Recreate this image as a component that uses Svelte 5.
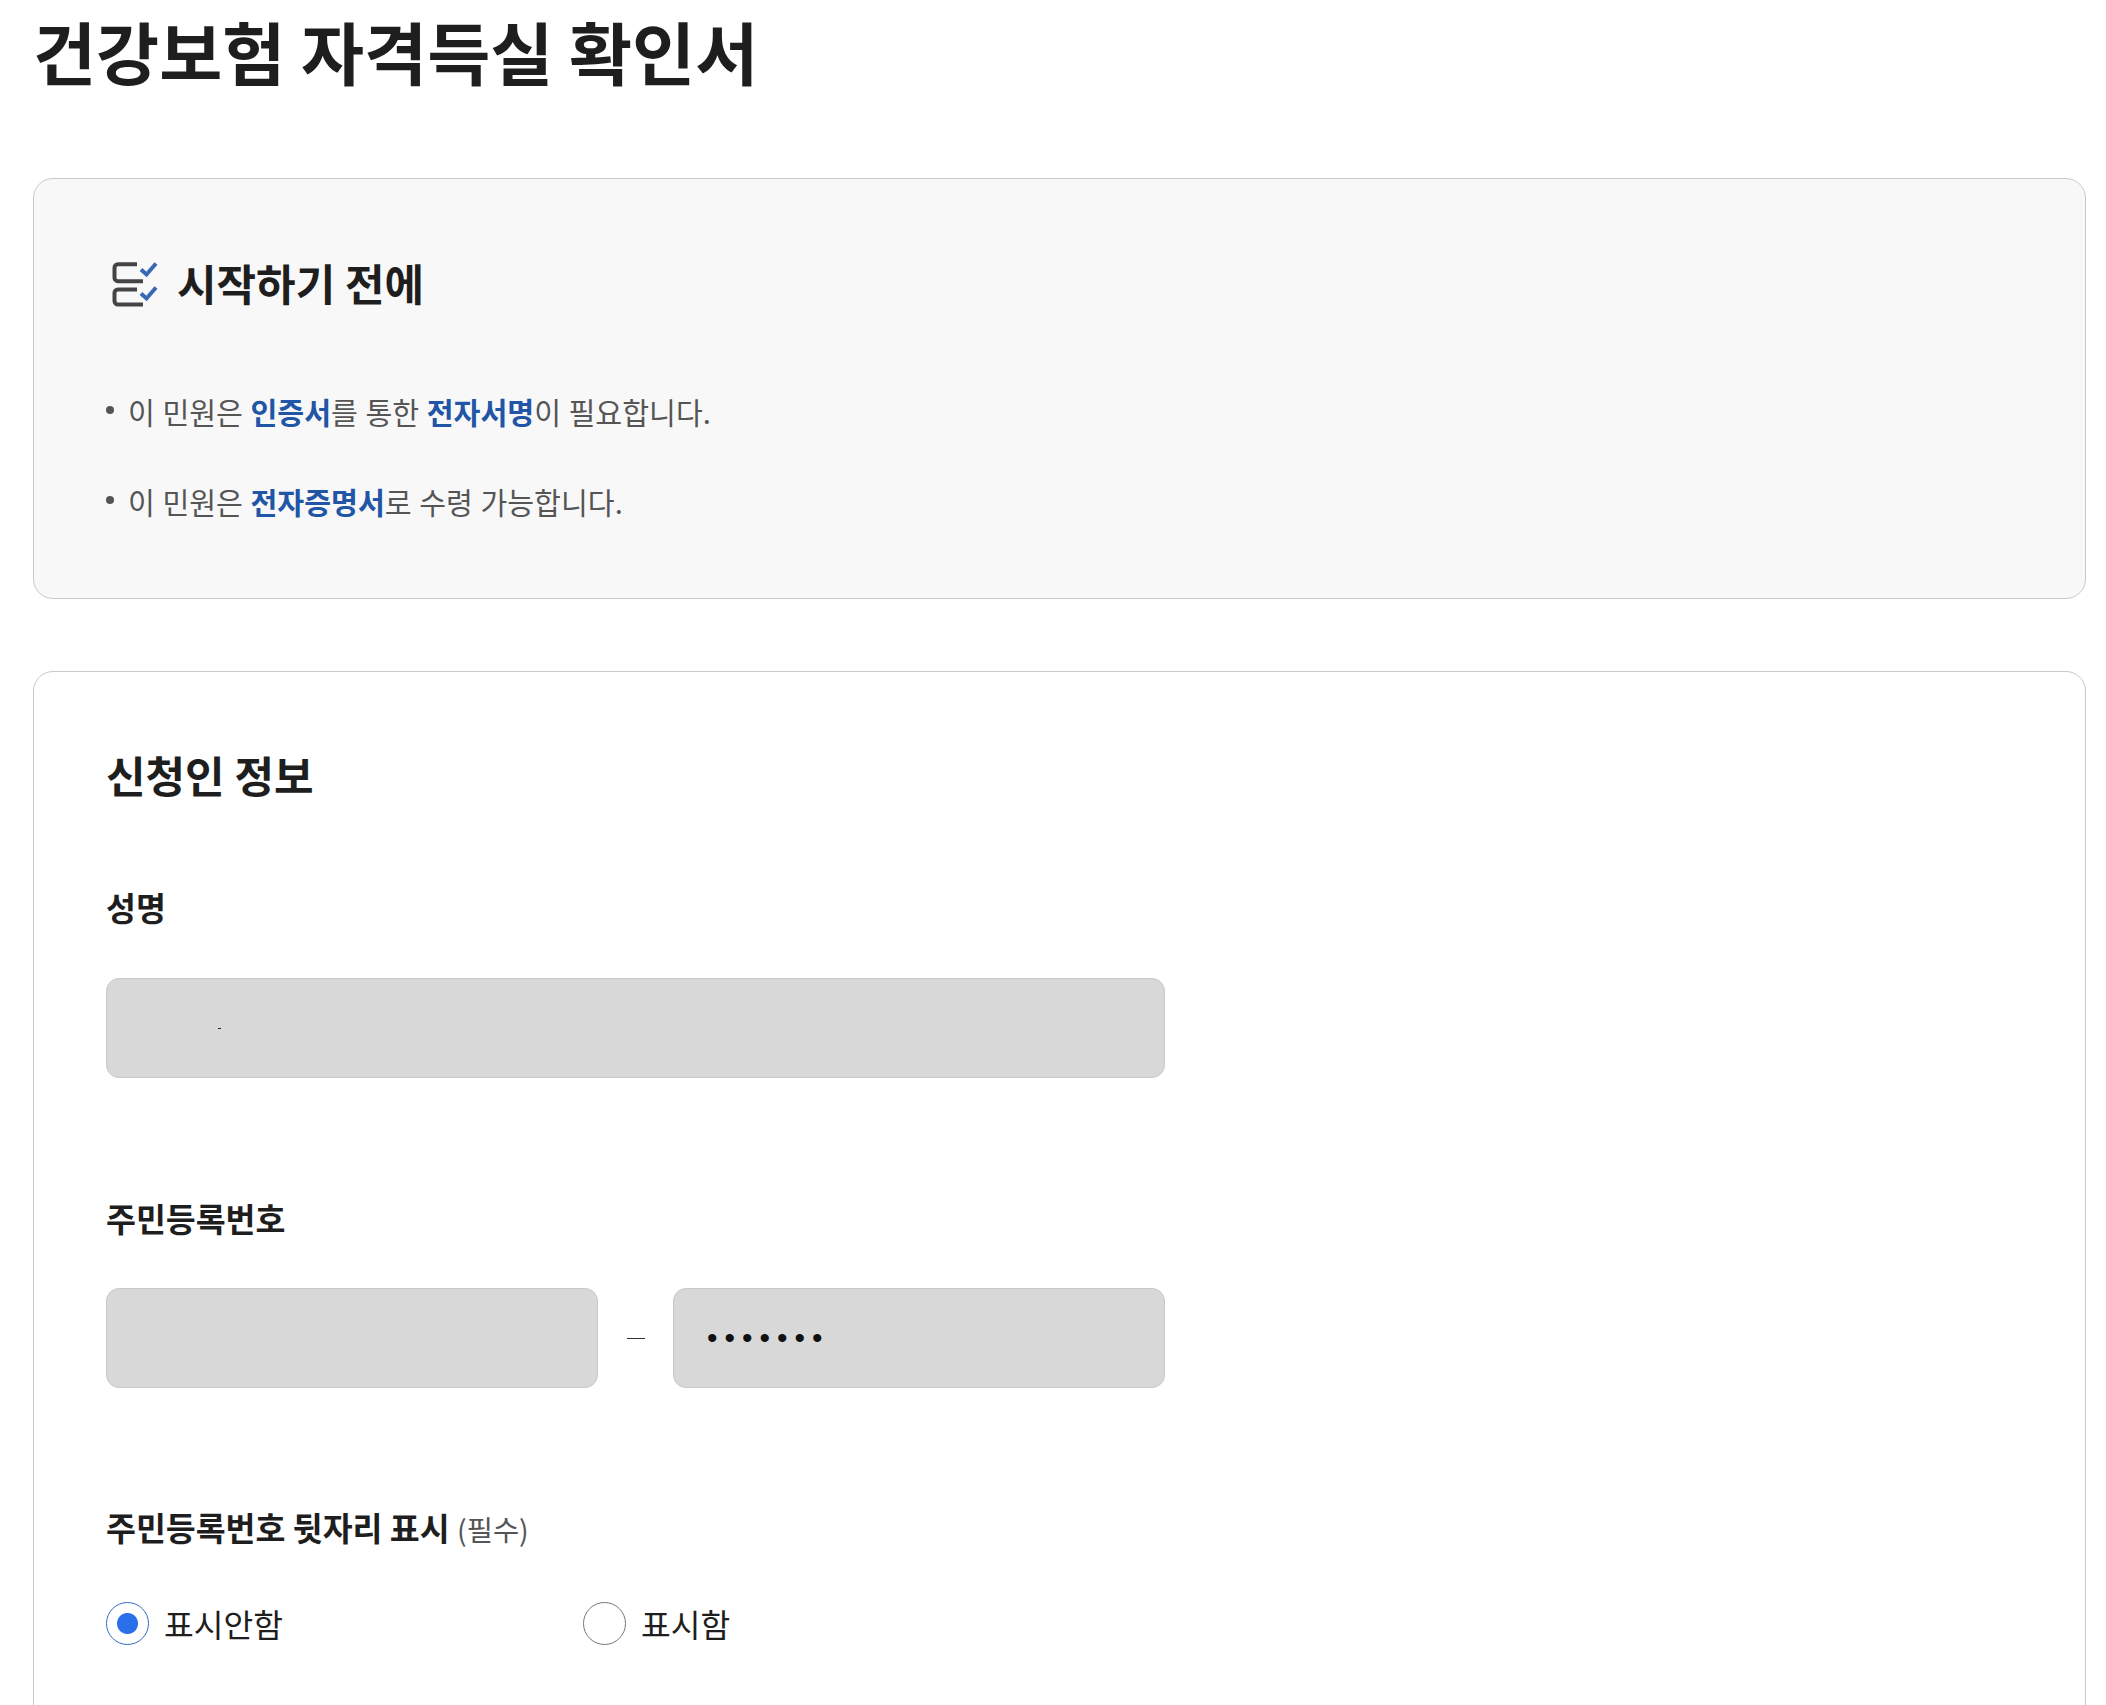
<script>
  const notices = [
    [["이 민원은 ", false], ["인증서", true], ["를 통한 ", false], ["전자서명", true], ["이 필요합니다.", false]],
    [["이 민원은 ", false], ["전자증명서", true], ["로 수령 가능합니다.", false]]
  ];

  let showBack = $state("no");
</script>

<div class="page">
  <h1>건강보험 자격득실 확인서</h1>

  <section class="notice">
    <h2 class="notice-title">
      <svg class="check-icon" viewBox="0 0 48 48" width="48" height="48" fill="none" stroke-width="4">
        <path d="M27 4.2H8a3.5 3.5 0 0 0-3.5 3.5v10a3.5 3.5 0 0 0 3.5 3.5h25" stroke="#444" />
        <path d="M27 29.5H8a3.5 3.5 0 0 0-3.5 3.5v8a3.5 3.5 0 0 0 3.5 3.5h25" stroke="#444" />
        <path d="M31 9.5l5.5 5L46 3.5" stroke="#3a68b4" />
        <path d="M31 33.5l5.5 5L46 27.5" stroke="#3a68b4" />
      </svg>
      시작하기 전에
    </h2>
    <ul>
      {#each notices as parts}
        <li>
          {#each parts as [text, strong]}{#if strong}<b>{text}</b>{:else}{text}{/if}{/each}
        </li>
      {/each}
    </ul>
  </section>

  <section class="form-card">
    <h2>신청인 정보</h2>

    <label class="field-label" for="name">성명</label>
    <div class="name-field">
      <input id="name" class="field wide" type="text" readonly />
      <span class="speck"></span>
    </div>

    <label class="field-label second" for="rrn-front">주민등록번호</label>
    <div class="rrn-row">
      <input id="rrn-front" class="field" type="text" readonly />
      <span class="dash"></span>
      <input class="field secret" type="password" value="1234567" readonly />
    </div>

    <p class="field-label third">주민등록번호 뒷자리 표시 <span class="required">(필수)</span></p>
    <div class="radio-row">
      <label class="radio">
        <input type="radio" name="show" value="no" bind:group={showBack} />
        <span>표시안함</span>
      </label>
      <label class="radio">
        <input type="radio" name="show" value="yes" bind:group={showBack} />
        <span>표시함</span>
      </label>
    </div>
  </section>
</div>

<style>
  :global(body) {
    background: #fff;
    color: #1e1e1e;
    font-family: "Noto Sans CJK KR", "Noto Sans", sans-serif;
  }

  .page {
    box-sizing: border-box;
    height: 1705px;
    overflow: hidden;
    padding: 0 20px 0 33px;
  }

  h1 {
    margin: 0 0 78px;
    font-size: 68.6px;
    line-height: 100px;
    font-weight: 700;
  }

  h2 {
    margin: 0;
    font-size: 43px;
    line-height: 60px;
    font-weight: 700;
  }

  .notice {
    height: 421px;
    box-sizing: border-box;
    padding: 73px 72px 0;
    background: #f8f8f8;
    border: 1px solid #c9c9c9;
    border-radius: 20px;
  }

  .notice-title {
    display: flex;
    align-items: center;
    gap: 19px;
    padding-left: 4px;
  }

  .check-icon {
    flex: none;
    margin-top: 3px;
  }

  ul {
    list-style: none;
    margin: 69px 0 0;
    padding: 0;
  }

  li {
    position: relative;
    padding-left: 22px;
    font-size: 29.2px;
    word-spacing: 1px;
    line-height: 60px;
    color: #555;
  }

  li + li {
    margin-top: 30px;
  }

  li::before {
    content: "";
    position: absolute;
    left: 0;
    top: 25px;
    width: 8px;
    height: 8px;
    border-radius: 50%;
    background: #555;
  }

  li b {
    color: #2155a6;
    font-weight: 700;
  }

  .form-card {
    margin-top: 72px;
    height: 1200px;
    box-sizing: border-box;
    padding: 72px 72px 0;
    background: #fff;
    border: 1px solid #c9c9c9;
    border-radius: 20px;
  }

  .field-label {
    display: block;
    margin: 79px 0 47px;
    font-size: 32.5px;
    line-height: 48px;
    font-weight: 700;
  }

  .field-label.second {
    margin: 116px 0 46px;
  }

  .field-label.third {
    margin: 115px 0 48px;
  }

  .required {
    font-size: 28.5px;
    font-weight: 400;
    color: #555;
  }

  .name-field {
    position: relative;
    width: 1059px;
  }

  .speck {
    position: absolute;
    left: 112px;
    top: 50px;
    width: 3px;
    height: 1px;
    background: #222;
  }

  .field {
    display: block;
    box-sizing: border-box;
    width: 492px;
    height: 100px;
    padding: 0 33px;
    background: #d8d8d8;
    border: 1px solid #c8c8c8;
    border-radius: 13px;
    color: #111;
    font-family: "Liberation Sans", sans-serif;
    font-size: 30px;
    outline: none;
  }

  .field.wide {
    width: 1059px;
  }

  .rrn-row {
    display: flex;
    align-items: center;
    width: 1059px;
  }

  .dash {
    width: 18px;
    height: 1px;
    margin: 0 28px 0 29px;
    background: #333;
  }

  .secret {
    letter-spacing: 7px;
  }

  .radio-row {
    display: grid;
    grid-template-columns: 477px 1fr;
  }

  .radio {
    display: flex;
    align-items: center;
    gap: 15px;
    height: 44px;
    font-size: 32.3px;
    line-height: 44px;
  }

  .radio input {
    appearance: none;
    box-sizing: border-box;
    width: 43px;
    height: 43px;
    margin: 0;
    border: 1.5px solid #777;
    border-radius: 50%;
    background: #fff;
  }

  .radio input:checked {
    border-color: #2f6cc4;
    background: radial-gradient(circle, #2a6eea 0 10px, #fff 11px);
  }
</style>
